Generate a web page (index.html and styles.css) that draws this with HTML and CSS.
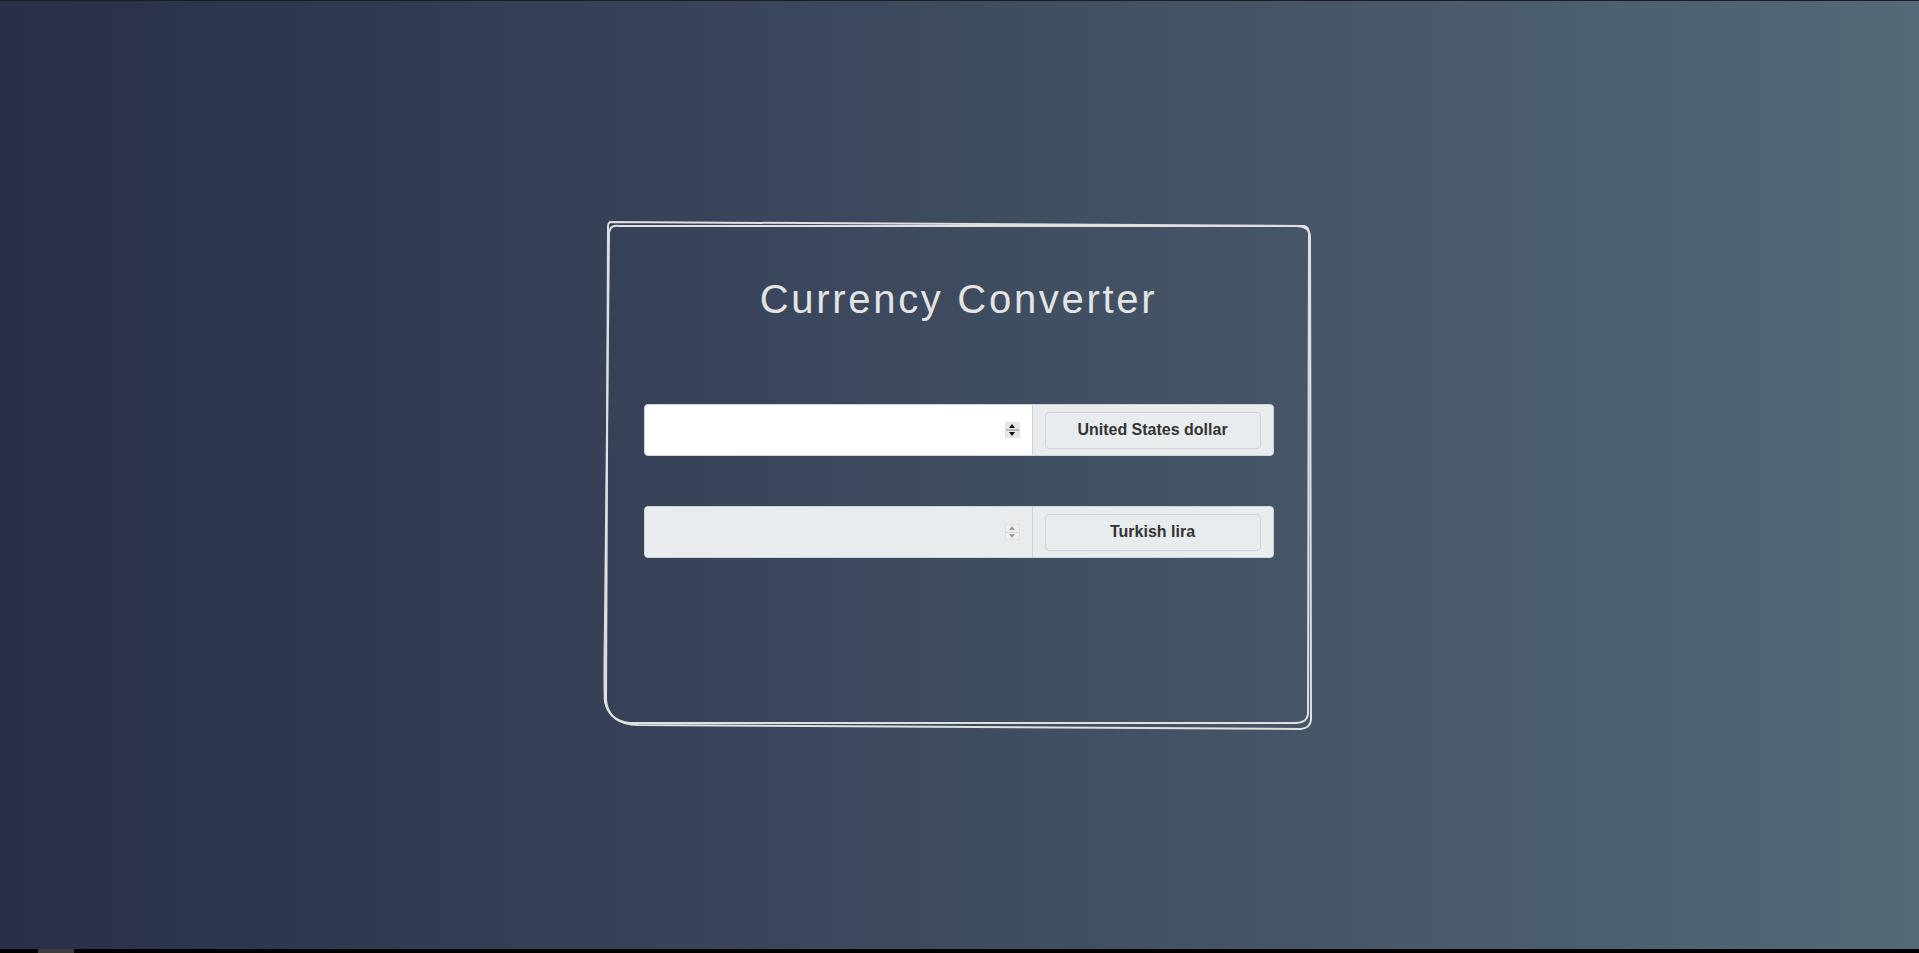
FILE: index.html
```html
<!DOCTYPE html>
<html lang="en">
<head>
<meta charset="utf-8">
<title>Currency Converter</title>
<link rel="stylesheet" href="styles.css">
</head>
<body>
<main class="stage">
  <section class="card">
    <svg class="sketch" viewBox="0 0 704 506" preserveAspectRatio="none" aria-hidden="true">
      <path d="M3,0 L696,4 Q701,5 701,12 L700,492 Q699,501 687,501 L22,501 Q0,499 -2,478 L0,5 Q0,0 3,0 Z" />
      <path d="M2,8 Q3,3 12,4 L688,4 Q702,4 702,15 L703,498 Q702,506 693,507 L30,503 Q2,502 -3,480 Q-4,470 -3,400 L1,10 Z" />
    </svg>
    <h1 class="title">Currency Converter</h1>
    <div class="rows">
      <div class="group">
        <div class="field">
          <input class="amount" type="number" aria-label="Amount">
          <span class="spin"><span class="spin-up"></span><span class="spin-down"></span></span>
        </div>
        <div class="append">
          <button class="cur-btn" type="button">United States dollar</button>
        </div>
      </div>
      <div class="group disabled">
        <div class="field">
          <input class="amount" type="number" disabled aria-label="Result">
          <span class="spin"><span class="spin-up"></span><span class="spin-down"></span></span>
        </div>
        <div class="append">
          <button class="cur-btn" type="button">Turkish lira</button>
        </div>
      </div>
    </div>
  </section>
</main>
<footer class="scrollbar"><span class="thumb"></span></footer>
</body>
</html>
```

FILE: styles.css
```css
* { box-sizing: border-box; }
html, body { margin: 0; padding: 0; }
body {
  width: 1919px;
  height: 953px;
  overflow: hidden;
  background: #000;
  font-family: "Liberation Sans", Arial, sans-serif;
  display: flex;
  flex-direction: column;
}
.stage {
  height: 949px;
  border-top: 1px solid #1c1d22;
  background: linear-gradient(to right, #292e49, #536976);
  display: flex;
  align-items: center;
  justify-content: center;
}
.card {
  position: relative;
  width: 704px;
  height: 506px;
  padding: 54px 38px 0 36px;
}
.sketch {
  position: absolute;
  left: 0;
  top: 0;
  width: 704px;
  height: 506px;
  overflow: visible;
  fill: none;
  stroke: #e0e0e0;
  stroke-width: 2;
  pointer-events: none;
}
.title {
  margin: 0;
  text-align: center;
  font-weight: 400;
  font-size: 40px;
  line-height: 46px;
  letter-spacing: 2.7px;
  color: #e4e4e4;
}
.rows {
  margin-top: 82px;
  display: flex;
  flex-direction: column;
  gap: 50px;
}
.group {
  display: flex;
  height: 52px;
  border: 1px solid #ced4da;
  border-radius: 4px;
  overflow: hidden;
  background: #e9ecef;
}
.field {
  flex: 1;
  display: flex;
  align-items: center;
  background: #fff;
  padding-right: 12px;
}
.group.disabled .field { background: #e9ecef; }
.amount {
  flex: 1;
  min-width: 0;
  height: 100%;
  border: 0;
  outline: none;
  background: transparent;
  padding: 0 16px;
  font-family: "Liberation Sans", Arial, sans-serif;
  font-size: 16px;
  color: #495057;
  -moz-appearance: textfield;
}
.amount::-webkit-inner-spin-button,
.amount::-webkit-outer-spin-button { -webkit-appearance: none; margin: 0; }
.spin {
  width: 15px;
  height: 16px;
  display: flex;
  flex-direction: column;
  background: #f0f0f0;
  border: 1px solid #e2e2e2;
}
.spin-up, .spin-down {
  flex: 1;
  display: flex;
  align-items: center;
  justify-content: center;
  background: #e6e6e6;
}
.spin-up { border-bottom: 2px solid #b9b9b9; }
.spin-up::before, .spin-down::before {
  content: "";
  width: 0;
  height: 0;
  border-left: 3px solid transparent;
  border-right: 3px solid transparent;
}
.spin-up::before { border-bottom: 4px solid #111; }
.spin-down::before { border-top: 4px solid #111; }
.group.disabled .spin { background: #f3f3f3; border-color: #e0e0e0; }
.group.disabled .spin-up, .group.disabled .spin-down { background: #efefef; }
.group.disabled .spin-up { border-bottom: 1px solid #d6d6d6; }
.group.disabled .spin-up::before { border-bottom-color: #9a9a9a; }
.group.disabled .spin-down::before { border-top-color: #9a9a9a; }
.append {
  display: flex;
  align-items: center;
  padding: 0 12px;
  border-left: 1px solid #ced4da;
  background: #e9ecef;
}
.cur-btn {
  width: 216px;
  height: 37px;
  margin: 0;
  border: 1px solid #ced4da;
  border-radius: 4px;
  background: #e9ecef;
  color: #343434;
  font-family: "Liberation Sans", Arial, sans-serif;
  font-weight: 700;
  font-size: 16px;
  padding: 0;
}
.scrollbar {
  height: 4px;
  background: #000;
  display: flex;
}
.thumb {
  width: 36px;
  margin-left: 38px;
  background: #3c3c3c;
}
```
